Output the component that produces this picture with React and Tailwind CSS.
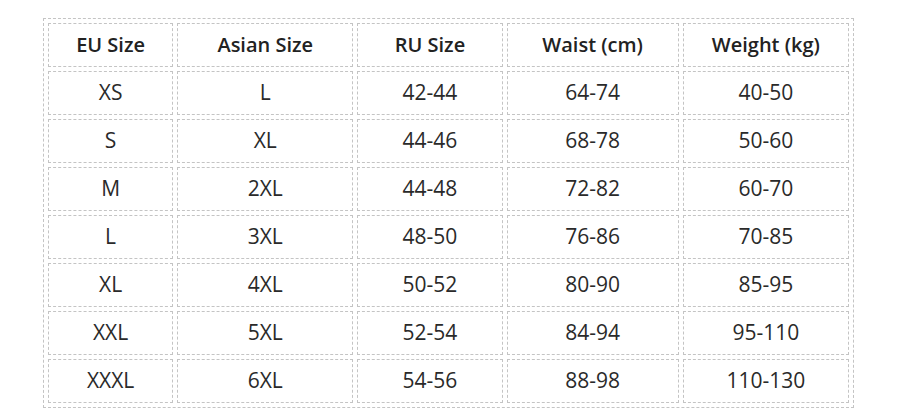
import React from "react";

const headers = ["EU Size", "Asian Size", "RU Size", "Waist (cm)", "Weight (kg)"];

const rows = [
  ["XS", "L", "42-44", "64-74", "40-50"],
  ["S", "XL", "44-46", "68-78", "50-60"],
  ["M", "2XL", "44-48", "72-82", "60-70"],
  ["L", "3XL", "48-50", "76-86", "70-85"],
  ["XL", "4XL", "50-52", "80-90", "85-95"],
  ["XXL", "5XL", "52-54", "84-94", "95-110"],
  ["XXXL", "6XL", "54-56", "88-98", "110-130"],
];

const widths = ["w-[125px]", "w-[176px]", "w-[145px]", "w-[172px]", "w-[166px]"];

const App = () => {
  return (
    <div className="w-[904px] h-[420px] bg-white pt-[18px] pl-[43px] font-['Open_Sans',sans-serif] text-[#222]">
      <table className="border-separate border-spacing-1 border border-dashed border-[#c4c4c4] w-[811px]">
        <thead>
          <tr>
            {headers.map((h, i) => (
              <th
                key={i}
                className={`${widths[i]} h-[44px] p-0 border border-dashed border-[#c4c4c4] text-center text-[20px] font-semibold`}
              >
                {h}
              </th>
            ))}
          </tr>
        </thead>
        <tbody>
          {rows.map((row, r) => (
            <tr key={r}>
              {row.map((cell, i) => (
                <td
                  key={i}
                  className="h-[44px] p-0 border border-dashed border-[#c4c4c4] text-center text-[21px] text-[#2a2a2a]"
                >
                  {cell}
                </td>
              ))}
            </tr>
          ))}
        </tbody>
      </table>
    </div>
  );
};

export default App;
